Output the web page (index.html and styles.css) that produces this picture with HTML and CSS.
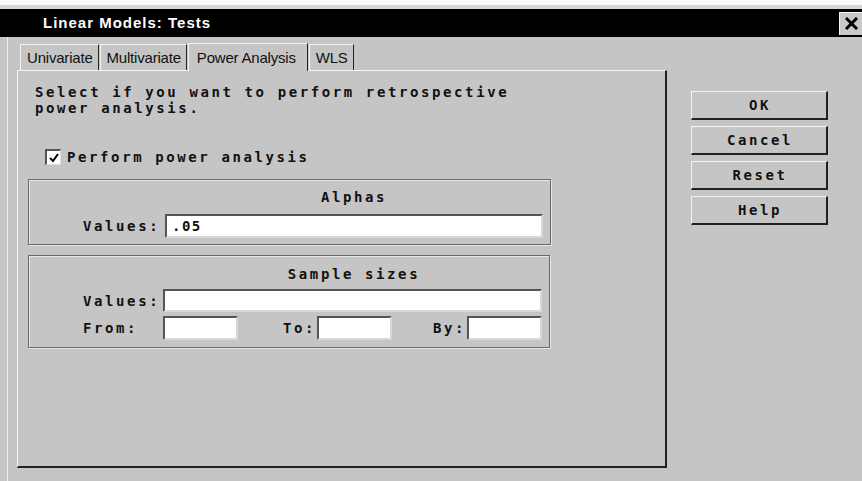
FILE: index.html
```html
<!DOCTYPE html>
<html lang="en">
<head>
<meta charset="utf-8">
<title>Linear Models: Tests</title>
<link rel="stylesheet" href="styles.css">
</head>
<body>
<div class="window">
  <div class="topstrip"></div>
  <div class="titlebar">
    <span class="title">Linear Models: Tests</span>
    <span class="close" aria-label="Close">
      <svg width="13" height="13" viewBox="0 0 13 13"><path d="M2 2 L11 11 M11 2 L2 11" stroke="#000" stroke-width="3" stroke-linecap="square"/></svg>
    </span>
  </div>
  <div class="body">
    <div class="frame">
      <div class="tabs">
        <div class="tab">Univariate</div>
        <div class="tab">Multivariate</div>
        <div class="tab active">Power Analysis</div>
        <div class="tab">WLS</div>
      </div>
      <div class="panel">
        <p class="intro">Select if you want to perform retrospective<br>power analysis.</p>
        <label class="check">
          <span class="box"><svg width="12" height="12" viewBox="0 0 12 12"><path d="M2 6 L5 9 L10 2" fill="none" stroke="#000" stroke-width="2"/></svg></span>
          <span>Perform power analysis</span>
        </label>
        <div class="group alphas">
          <div class="gtitle">Alphas</div>
          <div class="grow">
            <span class="lbl">Values:</span>
            <span class="field wide">.05</span>
          </div>
        </div>
        <div class="group samples">
          <div class="gtitle">Sample sizes</div>
          <div class="grow">
            <span class="lbl">Values:</span>
            <span class="field wide"></span>
          </div>
          <div class="grow">
            <span class="lbl">From:</span>
            <span class="field small"></span>
            <span class="lbl to">To:</span>
            <span class="field small"></span>
            <span class="lbl by">By:</span>
            <span class="field small"></span>
          </div>
        </div>
      </div>
    </div>
    <div class="buttons">
      <div class="btn">OK</div>
      <div class="btn">Cancel</div>
      <div class="btn">Reset</div>
      <div class="btn">Help</div>
    </div>
  </div>
</div>
</body>
</html>
```

FILE: styles.css
```css
html, body {
  margin: 0;
  padding: 0;
}

body {
  width: 862px;
  height: 481px;
  overflow: hidden;
  background: #c5c5c5;
  font-family: "DejaVu Sans Mono", "Liberation Mono", monospace;
  color: #111;
}

.window {
  width: 862px;
  height: 481px;
  display: flex;
  flex-direction: column;
}

.topstrip {
  height: 9px;
  background: linear-gradient(#fafafa 0 5px, #d6d6d6 5px);
}

.titlebar {
  height: 28px;
  background: #000;
  display: flex;
  align-items: center;
  justify-content: space-between;
}

.title {
  padding-left: 43px;
  font-family: "Liberation Sans", Arial, sans-serif;
  font-weight: bold;
  font-size: 15px;
  letter-spacing: 1px;
  color: #fff;
  line-height: 28px;
}

.close {
  width: 23px;
  height: 23px;
  box-sizing: border-box;
  background: #c8c8c8;
  border-top: 1px solid #f2f2f2;
  border-left: 1px solid #f2f2f2;
  display: flex;
  align-items: center;
  justify-content: center;
}

/* dialog body: tab frame on the left, command buttons on the right */
.body {
  flex: 1;
  display: flex;
  padding-left: 7px;
}

.frame {
  border-left: 1px solid #ececec;
  padding-left: 9px;
  padding-top: 5px;
  display: flex;
  flex-direction: column;
}

.tabs {
  display: flex;
  align-items: flex-end;
  height: 28px;
  padding-left: 3px;
}

.tab {
  height: 26px;
  box-sizing: border-box;
  padding: 0 5px 0 6px;
  font-family: "Liberation Sans", Arial, sans-serif;
  font-size: 15px;
  line-height: 25px;
  letter-spacing: -0.2px;
  color: #111;
  border-top: 1px solid #f4f4f4;
  border-left: 1px solid #f4f4f4;
  border-right: 1px solid #222;
  margin-right: 1px;
}

.tab.active {
  height: 28px;
  line-height: 27px;
  padding: 0 11px 0 8px;
  margin-bottom: -1px;
  position: relative;
  background: #c5c5c5;
  z-index: 1;
}

.panel {
  width: 650px;
  height: 398px;
  box-sizing: border-box;
  border-top: 1px solid #f4f4f4;
  border-left: 1px solid #f4f4f4;
  border-right: 2px solid #222;
  border-bottom: 2px solid #222;
  padding: 13px 0 0 10px;
}

.intro {
  margin: 0 0 0 7px;
  font-weight: bold;
  font-size: 14px;
  line-height: 16px;
  letter-spacing: 2.6px;
}

.check {
  margin: 33px 0 0 17px;
  display: flex;
  align-items: center;
  gap: 6px;
  font-weight: bold;
  font-size: 14px;
  line-height: 16px;
  letter-spacing: 2.6px;
}

.box {
  width: 16px;
  height: 16px;
  box-sizing: border-box;
  background: #fff;
  border-top: 2px solid #555;
  border-left: 2px solid #555;
  border-right: 1px solid #ddd;
  border-bottom: 1px solid #ddd;
  display: flex;
  align-items: center;
  justify-content: center;
}

/* etched group boxes */
.group {
  box-sizing: border-box;
  border: 1px solid #6a6a6a;
  box-shadow: inset 1px 1px 0 #e6e6e6, 1px 1px 0 #e6e6e6;
  padding: 9px 6px 6px 54px;
  display: flex;
  flex-direction: column;
  font-weight: bold;
  font-size: 14px;
  line-height: 16px;
  letter-spacing: 2.6px;
}

.alphas {
  width: 523px;
  height: 66px;
  margin-top: 14px;
  gap: 9px;
}

.samples {
  width: 522px;
  height: 93px;
  margin-top: 10px;
  padding-top: 10px;
  gap: 4px;
}

.samples .gtitle {
  margin-bottom: 3px;
}

.gtitle {
  margin-left: 82px;
  width: 378px;
  text-align: center;
}

.grow {
  display: flex;
  align-items: center;
}

.lbl {
  width: 82px;
  flex: none;
}

.samples .lbl {
  width: 80px;
}

.samples .lbl.to {
  width: 34px;
  margin-left: 45px;
}

.samples .lbl.by {
  width: 34px;
  margin-left: 41px;
}

.field {
  height: 24px;
  box-sizing: border-box;
  background: #fff;
  border-top: 2px solid #555;
  border-left: 2px solid #555;
  border-right: 2px solid #d8d8d8;
  border-bottom: 2px solid #d8d8d8;
  padding-left: 5px;
  line-height: 20px;
  letter-spacing: 1.5px;
  flex: none;
}

.alphas .field.wide {
  width: 378px;
}

.samples .field.wide {
  width: 379px;
  height: 23px;
}

.field.small {
  width: 75px;
}

.buttons {
  margin: 54px 0 0 24px;
  display: flex;
  flex-direction: column;
  gap: 6px;
}

.btn {
  width: 137px;
  height: 29px;
  box-sizing: border-box;
  border-top: 1px solid #f4f4f4;
  border-left: 1px solid #f4f4f4;
  border-right: 2px solid #222;
  border-bottom: 2px solid #222;
  text-align: center;
  font-weight: bold;
  font-size: 14px;
  line-height: 26px;
  letter-spacing: 2.6px;
  padding-left: 2px;
}
```
